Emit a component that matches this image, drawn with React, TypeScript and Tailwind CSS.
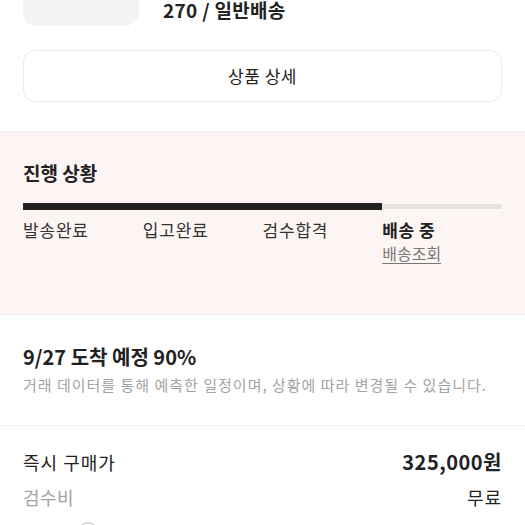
import { Info } from 'lucide-react'

const STEPS = [
  { id: 'sent', label: '발송완료' },
  { id: 'stocked', label: '입고완료' },
  { id: 'passed', label: '검수합격' },
  { id: 'shipping', label: '배송 중', current: true },
]

const fontStyle = "font-['Noto_Sans_CJK_KR','Noto_Sans',sans-serif]"

function ProgressSection() {
  return (
    <section className="border-y border-[#efeceb] bg-[#fdf5f4] px-[23px] pt-[29px] pb-[50px]">
      <h2 className="text-[19px] leading-[24px] font-bold text-[#222]">진행 상황</h2>
      <div className="relative mt-[18px] h-[7px]">
        <div className="absolute inset-x-0 top-[1px] h-[5px] bg-[#e6e2e0]" />
        <div className="absolute left-0 top-0 h-[7px] w-[75%] bg-[#222]" />
      </div>
      <div className="mt-[9px] grid grid-cols-4">
        {STEPS.map((step) => (
          <div key={step.id} className="flex flex-col">
            <span
              className={
                step.current
                  ? 'text-[17px] leading-[22px] tracking-[0.5px] font-bold text-[#222]'
                  : 'text-[17px] leading-[22px] tracking-[0.8px] text-[#333]'
              }
            >
              {step.label}
            </span>
            {step.current && (
              <span className="mt-[1px] text-[16px] leading-[22px] text-[#777] underline underline-offset-[3px] decoration-[#777]">
                배송조회
              </span>
            )}
          </div>
        ))}
      </div>
    </section>
  )
}

export default function App() {
  return (
    <div className={`h-[525px] w-[525px] overflow-hidden bg-white ${fontStyle}`}>
      <div className="-mt-[90px] flex gap-[24px] px-[23px]">
        <div className="h-[116px] w-[116px] shrink-0 rounded-[14px] bg-[#f4f4f4]" />
        <div className="flex flex-col justify-end pb-[4px]">
          <p className="text-[19px] leading-[24px] tracking-[0.3px] font-bold text-[#222]">270 / 일반배송</p>
        </div>
      </div>

      <div className="px-[23px] pt-[24px] pb-[29px]">
        <button className="flex h-[52px] w-full items-center justify-center rounded-[12px] border border-[#ebebeb] bg-white text-[17px] tracking-[0.5px] text-[#222]">
          상품 상세
        </button>
      </div>

      <ProgressSection />

      <section className="border-b border-[#efefef] px-[23px] pt-[29px] pb-[29px]">
        <h3 className="text-[20px] leading-[26px] font-bold text-[#222]">9/27 도착 예정 90%</h3>
        <p className="mt-[4px] text-[15px] leading-[22px] tracking-[1px] text-[#a3a3a3]">
          거래 데이터를 통해 예측한 일정이며, 상황에 따라 변경될 수 있습니다.
        </p>
      </section>

      <div className="flex flex-col gap-[11px] px-[23px] pt-[24px]">
        <div className="flex items-center justify-between">
          <span className="text-[18px] leading-[24px] tracking-[1px] text-[#222]">즉시 구매가</span>
          <span className="text-[20px] leading-[24px] tracking-[0.5px] font-bold text-[#222]">325,000원</span>
        </div>
        <div className="flex items-center justify-between">
          <span className="text-[18px] leading-[24px] tracking-[0.5px] text-[#a3a3a3]">검수비</span>
          <span className="text-[18px] leading-[24px] tracking-[1px] text-[#222]">무료</span>
        </div>
        <div className="flex items-start gap-[4px] pt-[1px]">
          <span className="pt-[16px] text-[18px] leading-[24px] tracking-[0.5px] text-[#a3a3a3]">수수료</span>
          <Info size={20} strokeWidth={1.5} className="text-[#c4c4c4]" />
        </div>
      </div>
    </div>
  )
}
